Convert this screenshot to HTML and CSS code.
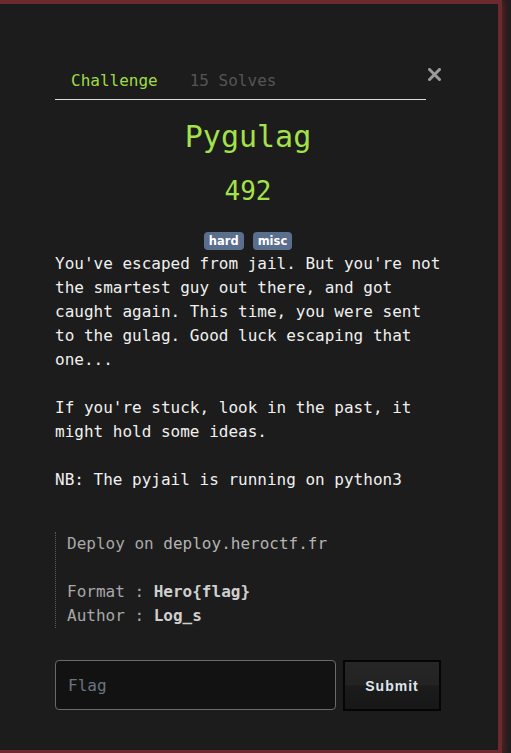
FILE: index.html
```html
<!DOCTYPE html>
<html>
<head>
<meta charset="utf-8">
<link rel="stylesheet" href="styles.css">
</head>
<body>
<div class="modal">
  <div class="header">
    <ul class="tabs">
      <li class="tab active">Challenge</li>
      <li class="tab">15 Solves</li>
    </ul>
    <button class="close" aria-label="Close">
      <svg width="13" height="13" viewBox="0 0 13 13"><path d="M1.5 1.5 L11.5 11.5 M11.5 1.5 L1.5 11.5" stroke="#9a9a9a" stroke-width="3" stroke-linecap="square"/></svg>
    </button>
  </div>
  <h2 class="title">Pygulag</h2>
  <div class="points">492</div>
  <div class="tags">
    <span class="badge">hard</span>
    <span class="badge">misc</span>
  </div>
  <div class="desc">
    <p>You've escaped from jail. But you're not the smartest guy out there, and got caught again. This time, you were sent to the gulag. Good luck escaping that one...</p>
    <p>If you're stuck, look in the past, it might hold some ideas.</p>
    <p class="last">NB: The pyjail is running on python3</p>
  </div>
  <div class="info">
    <div class="line">Deploy on <span class="code">deploy.heroctf.fr</span></div>
    <div class="line blank"></div>
    <div class="line">Format : <b>Hero{flag}</b></div>
    <div class="line">Author : <b>Log_s</b></div>
  </div>
  <form class="submit-row">
    <input class="flag" type="text" placeholder="Flag">
    <button class="submit" type="button">Submit</button>
  </form>
</div>
</body>
</html>
```

FILE: styles.css
```css
html, body {
  margin: 0;
  padding: 0;
  background: #1c1c1c;
  overflow: hidden;
}
.modal {
  box-sizing: border-box;
  width: 502px;
  height: 753px;
  background-color: #1c1c1c;
  border-top: 4px solid #6c2a2e;
  border-right: 4px solid #6c2a2e;
  border-bottom: 3px solid #6c2a2e;
  box-shadow: 0 0 9px 2px rgba(110, 36, 42, 0.85);
  padding: 55px 57px 0 55px;
  font-family: "DejaVu Sans Mono", "Liberation Mono", monospace;
  font-size: 16px;
  line-height: 24px;
  color: #f0f0f0;
}
.header {
  display: flex;
  align-items: flex-start;
}
.tabs {
  flex: 1;
  display: flex;
  list-style: none;
  margin: 0;
  padding: 0;
  border-bottom: 1px solid #dcdcdc;
}
.tab {
  padding: 10px 16px 6px;
  color: #555;
}
.tab.active {
  color: #9edc44;
}
.close {
  margin: 9px 0 0 2px;
  padding: 0;
  border: 0;
  background: none;
  width: 13px;
  height: 13px;
  display: flex;
}
.title {
  margin: 19px 0 0;
  text-align: center;
  font-size: 30px;
  line-height: 36px;
  font-weight: normal;
  color: #a4e24a;
}
.points {
  margin-top: 21px;
  text-align: center;
  font-size: 26px;
  line-height: 30px;
  color: #a4e24a;
}
.tags {
  margin-top: 26px;
  display: flex;
  justify-content: center;
  gap: 9px;
}
.badge {
  box-sizing: border-box;
  height: 18px;
  padding: 0 5px;
  border-radius: 4px;
  background: #5a6e8d;
  color: #fff;
  font-family: "DejaVu Sans", "Liberation Sans", sans-serif;
  font-weight: bold;
  font-size: 11.5px;
  line-height: 18px;
}
.desc {
  margin-top: 2px;
}
.desc p {
  margin: 0 0 24px;
}
.desc p.last {
  margin: 0;
}
.info {
  margin-top: 40px;
  border-left: 1px dotted #5a5a5a;
  padding-left: 11px;
  color: #a8a8a8;
}
.line.blank {
  height: 24px;
}
.code {
  color: #b4b4b4;
}
.info b {
  color: #cfcfcf;
}
.submit-row {
  margin: 32px 0 0;
  display: flex;
  gap: 7px;
  align-items: flex-start;
}
.flag {
  box-sizing: border-box;
  width: 281px;
  height: 50px;
  margin: 0;
  padding: 0 12px;
  background: #121212;
  border: 1px solid #6a6a6a;
  border-radius: 4px;
  font-family: "DejaVu Sans Mono", "Liberation Mono", monospace;
  font-size: 16px;
  color: #ddd;
  outline: none;
}
.flag::placeholder {
  color: #6b7480;
}
.submit {
  box-sizing: border-box;
  width: 98px;
  height: 51px;
  margin: 0;
  border: 2px solid #050505;
  background: linear-gradient(to bottom, #262626 0%, #232323 48%, #1b1b1b 52%, #171717 100%);
  color: #dfe5ee;
  font-family: "Liberation Sans", Arial, sans-serif;
  font-weight: bold;
  font-size: 14px;
  letter-spacing: 1px;
}
```
